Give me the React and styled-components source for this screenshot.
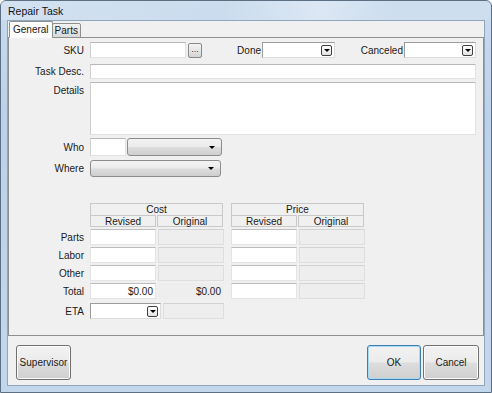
import React from 'react';
import styled, { createGlobalStyle } from 'styled-components';

const GlobalStyle = createGlobalStyle`
  html, body {
    margin: 0;
    padding: 0;
    background: #ffffff;
  }
  body {
    font-family: "Liberation Sans", Arial, sans-serif;
    font-size: 10px;
    color: #1a1a1a;
  }
`;

const Window = styled.div`
  width: 492px;
  height: 393px;
  box-sizing: border-box;
  border: 1px solid #5d6f83;
  border-radius: 6px 6px 0 0;
  background: linear-gradient(180deg, #c9dbee 0%, #bcd2ea 30%, #c3d7ec 100%);
  display: flex;
  flex-direction: column;
`;

const TitleBar = styled.div`
  height: 19px;
  padding-left: 7px;
  display: flex;
  align-items: center;
  font-size: 10.5px;
  color: #111;
  background: linear-gradient(90deg, rgba(255,255,255,0.2) 0%, rgba(255,255,255,0.05) 45%, rgba(255,255,255,0.35) 65%, rgba(255,255,255,0.1) 80%);
`;

const Client = styled.div`
  flex: 1;
  margin: 0 6px 6px 6px;
  border: 1px solid #8fa5bc;
  background: #f0f0f0;
  display: flex;
  flex-direction: column;
`;

const TabStrip = styled.div`
  display: flex;
  align-items: flex-end;
  height: 17px;
  padding-left: 1px;
  margin-bottom: -1px;
  position: relative;
  z-index: 1;
`;

const Tab = styled.div`
  box-sizing: border-box;
  height: ${(p) => (p.active ? '17px' : '15px')};
  padding: 0 ${(p) => (p.active ? '3px' : '2px')};
  display: flex;
  align-items: center;
  border: 1px solid #8e8f8f;
  border-bottom: ${(p) => (p.active ? '1px solid #fcfcfc' : '1px solid #8e8f8f')};
  margin-left: ${(p) => (p.active ? '0' : '-1px')};
  border-radius: 2px 2px 0 0;
  background: ${(p) =>
    p.active ? '#fcfcfc' : 'linear-gradient(180deg, #f2f2f2 0%, #e6e6e6 50%, #d9d9d9 100%)'};
  color: #1a1a1a;
`;

const Panel = styled.div`
  height: 299px;
  box-sizing: border-box;
  border: 1px solid #8e8f8f;
  background: #f0f0f0;
  padding: 4px 7px 0 0;
  display: flex;
  flex-direction: column;
`;

const Row = styled.div`
  display: flex;
  align-items: ${(p) => (p.top ? 'flex-start' : 'center')};
  margin-top: ${(p) => p.gap || 0}px;
`;

const Label = styled.div`
  width: ${(p) => p.w || 75}px;
  flex: none;
  text-align: right;
  margin-right: ${(p) => (p.tight ? 1 : 6)}px;
  padding-top: ${(p) => (p.top ? 3 : 0)}px;
  white-space: nowrap;
`;

const TextBox = styled.div`
  box-sizing: border-box;
  width: ${(p) => (p.w ? `${p.w}px` : 'auto')};
  flex: ${(p) => (p.w ? 'none' : 1)};
  height: ${(p) => p.h || 16}px;
  background: #ffffff;
  border: 1px solid #e2e2e2;
  border-top-color: #b9b9b9;
  border-left-color: #d0d0d0;
`;

const DotsButton = styled.div`
  box-sizing: border-box;
  width: 15px;
  height: 15px;
  margin-left: 2px;
  border: 1px solid #8a8a8a;
  border-radius: 2px;
  background: linear-gradient(180deg, #f4f4f4 0%, #e4e4e4 55%, #d2d2d2 100%);
  font-size: 9px;
  line-height: 10px;
  text-align: center;
  color: #333;
`;

const Combo = styled.div`
  box-sizing: border-box;
  width: ${(p) => p.w}px;
  height: 16px;
  flex: none;
  background: #ffffff;
  border: 1px solid #9c9c9c;
  border-right-color: #dcdcdc;
  border-bottom-color: #dcdcdc;
  display: flex;
  justify-content: flex-end;
  align-items: center;
  padding-right: 2px;
`;

const ComboArrow = styled.div`
  box-sizing: border-box;
  width: 11px;
  height: 11px;
  border: 1px solid #404040;
  border-radius: 2px;
  background: linear-gradient(180deg, #ffffff 0%, #e2e2e2 100%);
  display: flex;
  align-items: center;
  justify-content: center;

  &::after {
    content: '';
    border-left: 3px solid transparent;
    border-right: 3px solid transparent;
    border-top: 3px solid #000;
  }
`;

const DropButton = styled.div`
  box-sizing: border-box;
  width: ${(p) => p.w}px;
  height: ${(p) => p.h || 17}px;
  margin-left: ${(p) => p.ml || 0}px;
  flex: none;
  border: 1px solid #8c8c8c;
  border-radius: 3px;
  background: linear-gradient(180deg, #f3f3f3 0%, #ebebeb 48%, #dddddd 52%, #cfcfcf 100%);
  display: flex;
  align-items: center;
  justify-content: flex-end;
  padding-right: 6px;

  &::after {
    content: '';
    border-left: 3px solid transparent;
    border-right: 3px solid transparent;
    border-top: 3px solid #000;
  }
`;

const Group = styled.div`
  display: flex;
  flex-direction: column;
  width: 133px;
  margin-left: ${(p) => p.ml || 0}px;
`;

const GroupTitle = styled.div`
  box-sizing: border-box;
  height: 12px;
  border: 1px solid #c9c9c9;
  border-bottom: none;
  text-align: center;
  line-height: 11px;
`;

const SubHeads = styled.div`
  display: flex;
  gap: 1px;
`;

const SubHead = styled.div`
  box-sizing: border-box;
  flex: 1;
  height: 12px;
  border: 1px solid #c9c9c9;
  text-align: center;
  line-height: 11px;
`;

const Cells = styled.div`
  display: flex;
  gap: 2px;
  width: 133px;
  margin-left: ${(p) => p.ml || 0}px;
`;

const Cell = styled.div`
  box-sizing: border-box;
  width: ${(p) => p.w || 66}px;
  flex: none;
  height: 16px;
  margin-left: ${(p) => p.ml || 0}px;
  padding-right: 2px;
  text-align: right;
  line-height: 15px;
  background: ${(p) => (p.grey ? '#eeeeee' : '#ffffff')};
  border: 1px solid ${(p) => (p.bare ? 'transparent' : p.grey ? '#dedede' : '#e4e4e4')};
  border-top-color: ${(p) => (p.bare ? 'transparent' : p.grey ? '#d2d2d2' : '#bdbdbd')};
`;

const Spacer = styled.div`
  width: 81px;
  flex: none;
`;

const Footer = styled.div`
  flex: 1;
  display: flex;
  align-items: flex-start;
  padding: 9px 5px 0 8px;
`;

const PushButton = styled.div`
  box-sizing: border-box;
  width: ${(p) => p.w}px;
  height: 35px;
  margin-left: ${(p) => p.ml || 0}px;
  border: 1px solid ${(p) => (p.focused ? '#3c7fb1' : '#707070')};
  border-radius: 3px;
  background: linear-gradient(180deg, #f2f2f2 0%, #ebebeb 48%, #dddddd 52%, #cfcfcf 100%);
  box-shadow: ${(p) => (p.focused ? 'inset 0 0 0 1px #a7d8f4' : 'inset 0 0 0 1px #fbfbfb')};
  display: flex;
  align-items: center;
  justify-content: center;
  color: #1a1a1a;
`;

const FlexGap = styled.div`
  flex: 1;
`;

const moneyRows = ['Parts', 'Labor', 'Other'];

export default function App() {
  return (
    <>
      <GlobalStyle />
      <Window>
        <TitleBar>Repair Task</TitleBar>
        <Client>
          <TabStrip>
            <Tab active>General</Tab>
            <Tab>Parts</Tab>
          </TabStrip>
          <Panel>
            <Row>
              <Label>SKU</Label>
              <TextBox w={96} />
              <DotsButton>...</DotsButton>
              <Label w={59} tight>Done</Label>
              <Combo w={73}>
                <ComboArrow />
              </Combo>
              <Label w={68} tight>Canceled</Label>
              <Combo w={72}>
                <ComboArrow />
              </Combo>
            </Row>
            <Row gap={6}>
              <Label>Task Desc.</Label>
              <TextBox h={15} />
            </Row>
            <Row gap={3} top>
              <Label top>Details</Label>
              <TextBox h={53} />
            </Row>
            <Row gap={3}>
              <Label>Who</Label>
              <TextBox w={36} h={18} />
              <DropButton w={95} h={18} ml={1} />
            </Row>
            <Row gap={4}>
              <Label>Where</Label>
              <DropButton w={131} h={17} />
            </Row>
            <Row gap={26} top>
              <Spacer />
              <Group>
                <GroupTitle>Cost</GroupTitle>
                <SubHeads>
                  <SubHead>Revised</SubHead>
                  <SubHead>Original</SubHead>
                </SubHeads>
              </Group>
              <Group ml={8}>
                <GroupTitle>Price</GroupTitle>
                <SubHeads>
                  <SubHead>Revised</SubHead>
                  <SubHead>Original</SubHead>
                </SubHeads>
              </Group>
            </Row>
            {moneyRows.map((name) => (
              <Row gap={2} key={name}>
                <Label>{name}</Label>
                <Cells>
                  <Cell />
                  <Cell grey />
                </Cells>
                <Cells ml={8}>
                  <Cell />
                  <Cell grey />
                </Cells>
              </Row>
            ))}
            <Row gap={2}>
              <Label>Total</Label>
              <Cells>
                <Cell>$0.00</Cell>
                <Cell grey bare>$0.00</Cell>
              </Cells>
              <Cells ml={8}>
                <Cell />
                <Cell grey />
              </Cells>
            </Row>
            <Row gap={4}>
              <Label>ETA</Label>
              <Combo w={71}>
                <ComboArrow />
              </Combo>
              <Cell grey w={61} ml={2} />
            </Row>
          </Panel>
          <Footer>
            <PushButton w={55}>Supervisor</PushButton>
            <FlexGap />
            <PushButton w={54} focused>OK</PushButton>
            <PushButton w={56} ml={2}>Cancel</PushButton>
          </Footer>
        </Client>
      </Window>
    </>
  );
}
